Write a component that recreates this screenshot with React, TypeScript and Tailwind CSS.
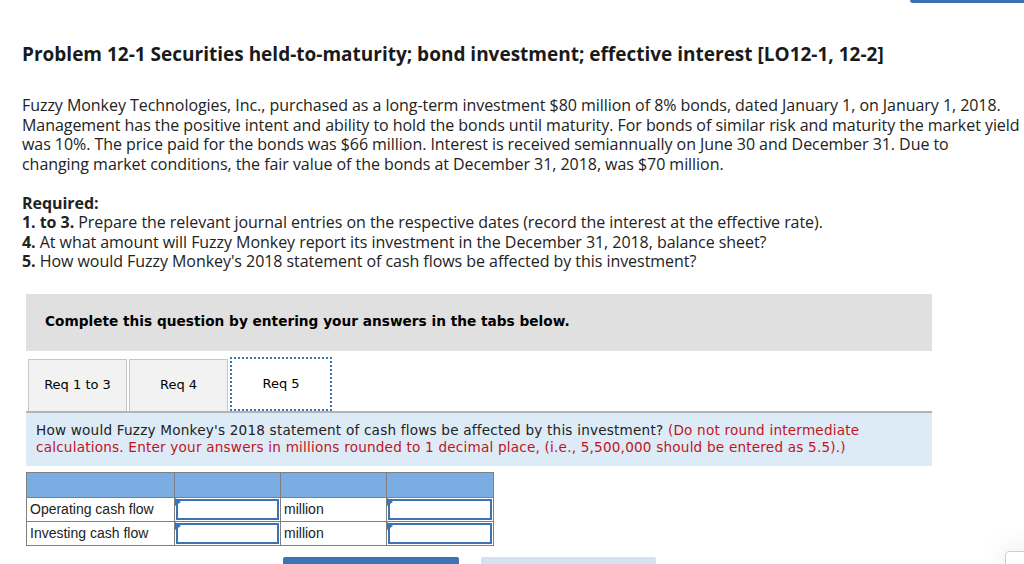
import React from 'react';

const tabs = ['Req 1 to 3', 'Req 4', 'Req 5'];
const rows = ['Operating cash flow', 'Investing cash flow'];

const Marker = () => (
  <span className="absolute left-0 top-0 w-0 h-0 border-t-[4px] border-b-[4px] border-l-[6px] border-t-transparent border-b-transparent border-l-[#3b73b9]" />
);

const InputCell: React.FC = () => (
  <td className="relative border border-[#808080] p-0 h-[24px]">
    <div className="absolute inset-[1px] border-2 border-[#3e73b3] bg-white" />
    <Marker />
  </td>
);

const App: React.FC = () => {
  return (
    <div className="relative w-[1024px] h-[564px] overflow-hidden bg-white text-[#222]">
      <div className="absolute right-0 top-0 w-[114px] h-[3px] bg-[#3a72b4] rounded-bl-sm" />

      <div className="pl-[22px] pt-[42px]" style={{ fontFamily: '"Open Sans", Lato, sans-serif' }}>
        <h1 className="text-[19px] leading-[24px] font-bold text-[#1a1a1a]">
          Problem 12-1 Securities held-to-maturity; bond investment; effective interest [LO12-1, 12-2]
        </h1>

        <p className="mt-[30px] text-[16px] leading-[19.5px] text-[#222] tracking-[-0.05px]">
          Fuzzy Monkey Technologies, Inc., purchased as a long-term investment $80 million of 8% bonds, dated January 1, on January 1, 2018.
          <br />
          Management has the positive intent and ability to hold the bonds until maturity. For bonds of similar risk and maturity the market yield
          <br />
          was 10%. The price paid for the bonds was $66 million. Interest is received semiannually on June 30 and December 31. Due to
          <br />
          changing market conditions, the fair value of the bonds at December 31, 2018, was $70 million.
        </p>

        <div className="mt-[19.5px] text-[16px] leading-[19.5px] text-[#222] tracking-[-0.05px]">
          <p className="font-bold">Required:</p>
          <p>
            <span className="font-bold">1. to 3.</span> Prepare the relevant journal entries on the respective dates (record the interest at the effective rate).
          </p>
          <p>
            <span className="font-bold">4.</span> At what amount will Fuzzy Monkey report its investment in the December 31, 2018, balance sheet?
          </p>
          <p>
            <span className="font-bold">5.</span> How would Fuzzy Monkey's 2018 statement of cash flows be affected by this investment?
          </p>
        </div>
      </div>

      <div className="ml-[26px] w-[906px] mt-[22px]" style={{ fontFamily: '"DejaVu Sans", Verdana, sans-serif' }}>
        <div className="h-[57px] bg-[#e0e0e0] pl-[19px] pt-[15px]">
          <span className="text-[13.7px] leading-[18px] font-bold text-black">
            Complete this question by entering your answers in the tabs below.
          </span>
        </div>

        <div className="mt-[6px] flex items-end gap-[2px] pl-[2px] h-[54px]">
          {tabs.map((t, i) =>
            i === 2 ? (
              <div
                key={t}
                className="w-[102px] h-[54px] bg-white border-2 border-dotted border-[#3c74b8] flex items-center justify-center text-[13px] text-black"
              >
                {t}
              </div>
            ) : (
              <div
                key={t}
                className="w-[99px] h-[52px] bg-[#f2f2f2] border border-[#c6c6c6] border-b-0 flex items-center justify-center text-[13px] text-black"
              >
                {t}
              </div>
            )
          )}
        </div>

        <div className="border-t-2 border-[#b4b4b4] bg-[#ddebf7] h-[55px] pl-[10px] pt-[9px] text-[13.6px] leading-[17px] text-[#222] tracking-[0.2px]">
          How would Fuzzy Monkey's 2018 statement of cash flows be affected by this investment?{' '}
          <span className="text-[#c0141c]">(Do not round intermediate</span>
          <br />
          <span className="text-[#c0141c]">
            calculations. Enter your answers in millions rounded to 1 decimal place, (i.e., 5,500,000 should be entered as 5.5).)
          </span>
        </div>

        <table
          className="mt-[6px] border-collapse text-[14px] text-[#222]"
          style={{ fontFamily: '"Liberation Sans", Arial, sans-serif' }}
        >
          <thead>
            <tr className="bg-[#7aaee2]">
              <th className="w-[148px] h-[25px] border border-[#808080]" />
              <th className="w-[106px] h-[25px] border border-[#808080]" />
              <th className="w-[106px] h-[25px] border border-[#808080]" />
              <th className="w-[107px] h-[25px] border border-[#808080]" />
            </tr>
          </thead>
          <tbody>
            {rows.map((r) => (
              <tr key={r}>
                <td className="border border-[#808080] pl-[3px] py-0 h-[24px] leading-[20px]">{r}</td>
                <InputCell />
                <td className="border border-[#808080] pl-[3px] py-0 h-[24px] leading-[20px]">million</td>
                <InputCell />
              </tr>
            ))}
          </tbody>
        </table>
      </div>

      <div className="absolute left-[283px] top-[557px] w-[176px] h-[10px] bg-[#3d74b5] rounded-t-[2px]" />
      <div className="absolute left-[481px] top-[557px] w-[175px] h-[10px] bg-[#d6e2f1] rounded-t-[2px]" />
      <div className="absolute left-[1005px] top-[551px] w-[30px] h-[20px] bg-white border border-[#cfcfcf] shadow-[0_0_30px_rgba(0,0,0,0.12)] rounded-tl-[4px]" />
    </div>
  );
};

export default App;
